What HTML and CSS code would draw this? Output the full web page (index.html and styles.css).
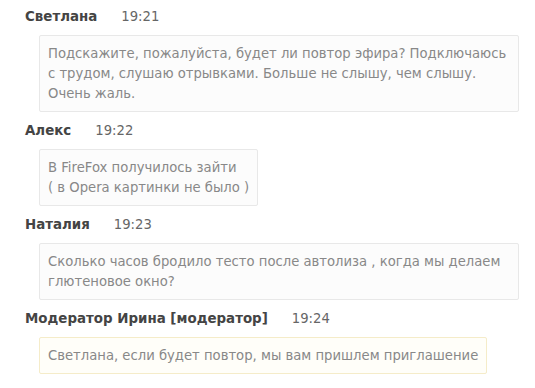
FILE: index.html
```html
<!DOCTYPE html>
<html lang="ru">
<head>
    <meta charset="UTF-8">
    <title>Чат</title>
    <link rel="stylesheet" href="styles.css">
</head>
<body>
    <!-- Лента сообщений чата -->
    <div class="chat">
        <div class="msg">
            <div class="msg-head">
                <span class="author">Светлана</span>
                <span class="time">19:21</span>
            </div>
            <div class="bubble">Подскажите, пожалуйста, будет ли повтор эфира? Подключаюсь с трудом, слушаю отрывками. Больше не слышу, чем слышу. Очень жаль.</div>
        </div>
        <div class="msg">
            <div class="msg-head">
                <span class="author">Алекс</span>
                <span class="time">19:22</span>
            </div>
            <div class="bubble">В FireFox получилось зайти<br>( в Opera картинки не было )</div>
        </div>
        <div class="msg">
            <div class="msg-head">
                <span class="author">Наталия</span>
                <span class="time">19:23</span>
            </div>
            <div class="bubble">Сколько часов бродило тесто после автолиза , когда мы делаем глютеновое окно?</div>
        </div>
        <div class="msg moderator">
            <div class="msg-head">
                <span class="author">Модератор Ирина [модератор]</span>
                <span class="time">19:24</span>
            </div>
            <div class="bubble">Светлана, если будет повтор, мы вам пришлем приглашение</div>
        </div>
    </div>
</body>
</html>
```

FILE: styles.css
```css
/* Общие стили страницы */
body {
    margin: 0;
    background: #fff;
    font-family: "DejaVu Sans", sans-serif;
    font-size: 13.2px;
}
.chat {
    padding: 7px 0 0 25px;
}
.msg {
    margin-bottom: 9px;
}
/* Заголовок сообщения: имя и время */
.msg-head {
    display: flex;
    gap: 24px;
    line-height: 20px;
    margin-bottom: 8px;
}
.author {
    font-weight: bold;
    font-size: 13.4px;
    color: #444;
}
.time {
    color: #666;
}
/* Текст сообщения в рамке */
.bubble {
    display: inline-block;
    box-sizing: border-box;
    max-width: 480px;
    margin-left: 14px;
    padding: 8px 8px 7px 8px;
    line-height: 20px;
    color: #888;
    background: #fcfcfc;
    border: 1px solid #e8e8e8;
    border-radius: 2px;
}
/* Сообщение модератора */
.moderator .bubble {
    background: #fffef9;
    border-color: #f5ecc9;
}
```
